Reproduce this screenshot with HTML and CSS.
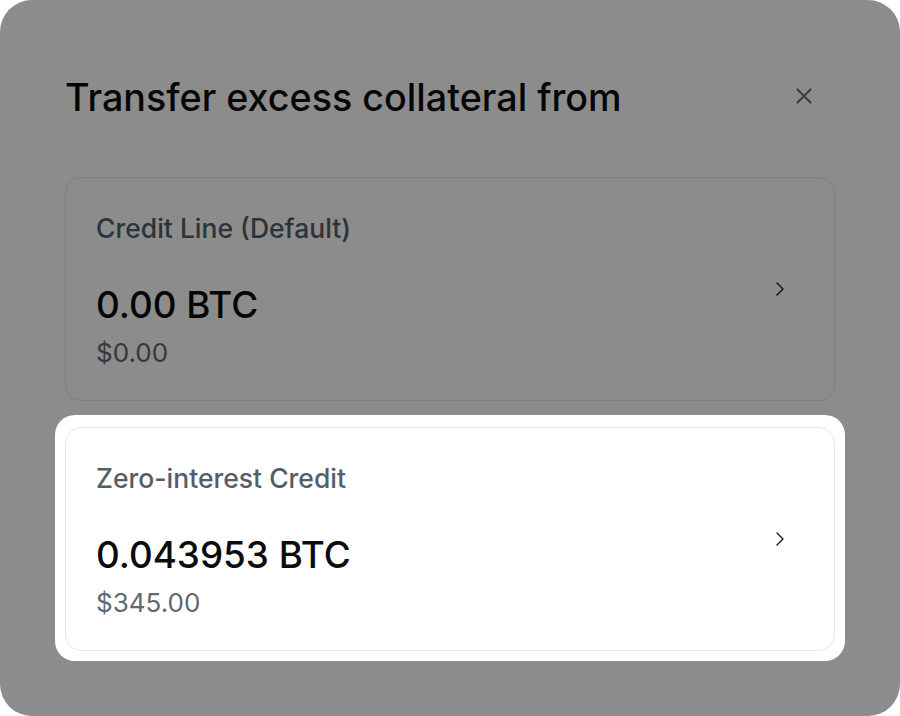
FILE: index.html
```html
<!DOCTYPE html>
<html lang="en">
<head>
<meta charset="utf-8">
<title>Transfer excess collateral</title>
<link rel="stylesheet" href="styles.css">
</head>
<body>
<div class="modal">
  <div class="header">
    <h1 class="title">Transfer excess collateral from</h1>
    <button class="close" aria-label="Close">
      <svg width="24" height="24" viewBox="0 0 24 24" fill="none"><path d="M5.5 5.5l13 13M18.5 5.5l-13 13" stroke="currentColor" stroke-width="2.2" stroke-linecap="round"/></svg>
    </button>
  </div>
  <div class="cards">
    <div class="card">
      <div class="info">
        <div class="label">Credit Line (Default)</div>
        <div class="amount">0.00 BTC</div>
        <div class="usd">$0.00</div>
      </div>
      <svg class="chev" width="24" height="24" viewBox="0 0 24 24" fill="none"><path d="M9 6l6 6-6 6" stroke="currentColor" stroke-width="1.3" stroke-linecap="round" stroke-linejoin="round"/></svg>
    </div>
    <div class="spotlight">
      <div class="card">
        <div class="info">
          <div class="label">Zero-interest Credit</div>
          <div class="amount">0.043953 BTC</div>
          <div class="usd">$345.00</div>
        </div>
        <svg class="chev" width="24" height="24" viewBox="0 0 24 24" fill="none"><path d="M9 6l6 6-6 6" stroke="currentColor" stroke-width="1.3" stroke-linecap="round" stroke-linejoin="round"/></svg>
      </div>
    </div>
  </div>
</div>
</body>
</html>
```
FILE: styles.css
```css
* { box-sizing: border-box; }
html, body { margin: 0; padding: 0; background: #ffffff; }
body { font-family: Inter, "Noto Sans", sans-serif; }

.modal {
  width: 900px;
  height: 716px;
  border-radius: 32px;
  overflow: hidden;
  background: #ffffff;
  padding: 75px 65px;
}

.header {
  display: flex;
  align-items: center;
  justify-content: space-between;
}

.title {
  margin: 0;
  font-size: 37.7px;
  line-height: 44px;
  font-weight: 500;
  color: #0b0c0e;
}

.close {
  border: 0;
  background: none;
  padding: 0;
  margin-right: 19px;
  margin-bottom: 2px;
  color: #6b7280;
  display: flex;
}

.cards {
  margin-top: 58px;
  display: flex;
  flex-direction: column;
  gap: 26px;
}

.card {
  display: flex;
  align-items: center;
  border: 1px solid #e2e8f0;
  border-radius: 16px;
  padding: 34px 30px 31px 30px;
  background: #ffffff;
}

.info { flex: 1; }

.label {
  font-size: 26.5px;
  line-height: 32px;
  font-weight: 500;
  color: #545d68;
}

.amount {
  margin-top: 39px;
  font-size: 36.8px;
  line-height: 44px;
  font-weight: 500;
  color: #0b0c0e;
}

.usd {
  margin-top: 10px;
  font-size: 26px;
  line-height: 32px;
  font-weight: 400;
  color: #5f6873;
}

.chev {
  color: #111318;
  margin-right: 12px;
  margin-bottom: 4px;
}

.spotlight {
  position: relative;
  z-index: 1;
  margin: -12px -10px -10px;
  padding: 12px 10px 10px;
  background: #ffffff;
  border-radius: 20px;
  box-shadow: 0 0 0 2000px rgba(0, 0, 0, 0.45);
}
```
